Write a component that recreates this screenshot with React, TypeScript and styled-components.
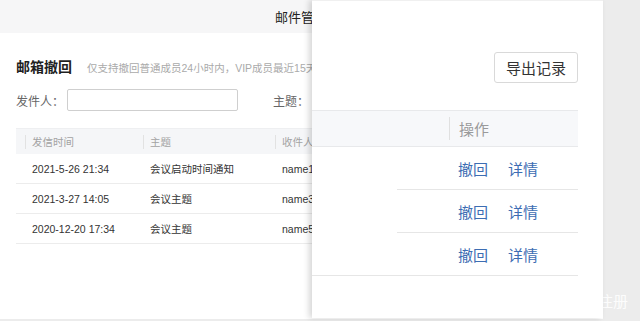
import React from 'react';
import styled, { createGlobalStyle } from 'styled-components';

const GlobalStyle = createGlobalStyle`
  html, body {
    margin: 0;
    padding: 0;
    background: #ececec;
  }
  body {
    font-family: "Liberation Sans", "Noto Sans CJK SC", sans-serif;
    color: #333;
  }
`;

const Stage = styled.div`
  position: relative;
  width: 640px;
  height: 321px;
  overflow: hidden;
  background: #ececec;
`;

/* ---------- background page ---------- */

const BackPage = styled.div`
  width: 603px;
  height: 319px;
  background: #fff;
  overflow: hidden;
`;

const TopBar = styled.div`
  height: 33px;
  background: #f6f6f7;
  display: flex;
  align-items: center;
  padding-left: 275px;
  font-size: 13px;
  color: #222;
`;

const Content = styled.div`
  padding: 0 16px;
`;

const TitleRow = styled.div`
  display: flex;
  align-items: baseline;
  gap: 15px;
  margin-top: 23px;
  height: 17px;
  white-space: nowrap;
`;

const Title = styled.h2`
  margin: 0;
  font-size: 14px;
  font-weight: bold;
  color: #1f1f1f;
`;

const Hint = styled.span`
  font-size: 10.5px;
  color: #aaa;
`;

const FilterRow = styled.div`
  display: flex;
  align-items: center;
  margin-top: 16px;
  height: 22px;
  font-size: 12px;
  color: #666;
  white-space: nowrap;
`;

const FilterLabel = styled.label`
  width: 51px;
`;

const TextInput = styled.div`
  width: 169px;
  height: 20px;
  border: 1px solid #cfcfcf;
  border-radius: 2px;
  margin-right: 35px;
`;

const Grid = styled.div`
  display: grid;
  grid-template-columns: 9px 118px 132px 1fr;
  margin-top: 17px;
`;

const HeadCell = styled.div<{ $sep?: boolean }>`
  position: relative;
  height: 26px;
  line-height: 26px;
  padding-left: 7px;
  background: #f5f6f8;
  border-top: 1px solid #eeeff1;
  box-sizing: border-box;
  font-size: 10.5px;
  color: #a3a3a3;
  white-space: nowrap;
  &::before {
    content: '';
    display: ${(p) => (p.$sep ? 'block' : 'none')};
    position: absolute;
    left: 0;
    top: 6px;
    width: 1px;
    height: 14px;
    background: #e2e2e2;
  }
`;

const BodyCell = styled.div`
  height: 30px;
  line-height: 30px;
  padding-left: 7px;
  border-bottom: 1px solid #ececec;
  box-sizing: border-box;
  font-size: 10.5px;
  color: #333;
  white-space: nowrap;
  overflow: hidden;
`;

/* ---------- zoomed panel ---------- */

const Panel = styled.div`
  position: absolute;
  left: 312px;
  top: 0;
  width: 291px;
  height: 318px;
  background: #fff;
  box-shadow: -3px 0 6px rgba(0, 0, 0, 0.16);
  border-top: 1px solid #f0f0f0;
  box-sizing: border-box;
  z-index: 2;
  display: flex;
  flex-direction: column;
  padding-right: 25px;
`;

const Toolbar = styled.div`
  display: flex;
  justify-content: flex-end;
  padding-top: 51px;
`;

const ExportButton = styled.button`
  width: 84px;
  height: 31px;
  border: 1px solid #d9d9d9;
  border-radius: 3px;
  background: #fff;
  font-family: inherit;
  font-size: 15px;
  color: #333;
  padding: 0;
`;

const PanelHead = styled.div`
  display: flex;
  align-items: center;
  height: 37px;
  margin-top: 27px;
  background: #f7f8fa;
  border-top: 1px solid #e8e9eb;
  border-bottom: 1px solid #e8e9eb;
  box-sizing: border-box;
  padding-left: 137px;
`;

const HeadSep = styled.span`
  width: 1px;
  height: 23px;
  background: #e0e0e0;
  margin-right: 9px;
`;

const HeadText = styled.span`
  font-size: 15px;
  color: #9a9a9a;
`;

const PanelRow = styled.div`
  display: flex;
  flex-direction: column;
`;

const RowBody = styled.div`
  display: flex;
  align-items: center;
  gap: 20px;
  height: 42px;
  padding-left: 146px;
`;

const Divider = styled.div<{ $inset: number }>`
  height: 1px;
  margin-left: ${(p) => p.$inset}px;
  background: #e6e6e6;
`;

const ActionLink = styled.a`
  font-size: 15px;
  color: #3d6db3;
  text-decoration: none;
  cursor: pointer;
`;

const Watermark = styled.span`
  position: absolute;
  left: 598px;
  top: 290px;
  font-size: 15px;
  color: rgba(255, 255, 255, 0.9);
  z-index: 1;
`;

const rows = [
  { time: '2021-5-26 21:34', subject: '会议启动时间通知', to: 'name1@mail.com' },
  { time: '2021-3-27 14:05', subject: '会议主题', to: 'name3@mail.com' },
  { time: '2020-12-20 17:34', subject: '会议主题', to: 'name5@mail.com' },
];

export default function App() {
  return (
    <>
      <GlobalStyle />
      <Stage>
        <BackPage>
          <TopBar>邮件管理系统</TopBar>
          <Content>
            <TitleRow>
              <Title>邮箱撤回</Title>
              <Hint>仅支持撤回普通成员24小时内，VIP成员最近15天内的邮件</Hint>
            </TitleRow>
            <FilterRow>
              <FilterLabel>发件人：</FilterLabel>
              <TextInput />
              <FilterLabel>主题：</FilterLabel>
              <TextInput />
            </FilterRow>
            <Grid>
              <HeadCell />
              <HeadCell $sep>发信时间</HeadCell>
              <HeadCell $sep>主题</HeadCell>
              <HeadCell $sep>收件人</HeadCell>
              {rows.map((r) => (
                <React.Fragment key={r.time}>
                  <BodyCell />
                  <BodyCell>{r.time}</BodyCell>
                  <BodyCell>{r.subject}</BodyCell>
                  <BodyCell>{r.to}</BodyCell>
                </React.Fragment>
              ))}
            </Grid>
          </Content>
        </BackPage>

        <Watermark>注册</Watermark>

        <Panel>
          <Toolbar>
            <ExportButton>导出记录</ExportButton>
          </Toolbar>
          <PanelHead>
            <HeadSep />
            <HeadText>操作</HeadText>
          </PanelHead>
          {rows.map((r, i) => (
            <PanelRow key={r.time}>
              <RowBody>
                <ActionLink>撤回</ActionLink>
                <ActionLink>详情</ActionLink>
              </RowBody>
              <Divider $inset={i < 2 ? 85 : 0} />
            </PanelRow>
          ))}
        </Panel>
      </Stage>
    </>
  );
}
